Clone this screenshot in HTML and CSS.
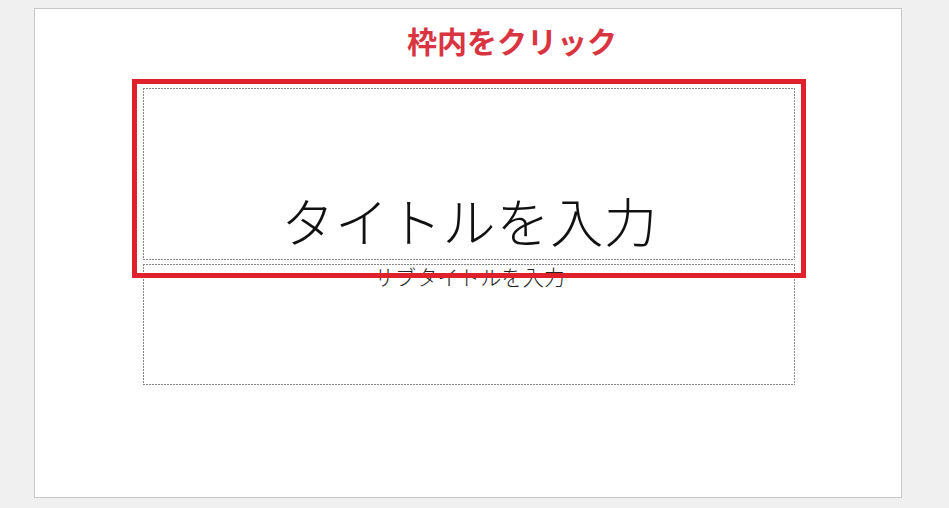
FILE: index.html
```html
<!DOCTYPE html>
<html lang="ja">
<head>
<meta charset="utf-8">
<title>タイトルスライド</title>
<link rel="stylesheet" href="styles.css">
</head>
<body>
<div class="slide">
  <div class="ph ph-title"><span class="title-text">タイトルを入力</span></div>
  <div class="ph ph-sub"><span class="sub-text">サブタイトルを入力</span></div>
  <div class="note-label">枠内をクリック</div>
  <div class="note-box"></div>
</div>
</body>
</html>
```
FILE: styles.css
```css
html, body {
  margin: 0;
  padding: 0;
}
body {
  background: #f0f0f0;
  width: 949px;
  height: 508px;
  overflow: hidden;
  font-family: "Noto Sans CJK JP", "Noto Sans", sans-serif;
}
.slide {
  position: relative;
  box-sizing: border-box;
  margin: 8px 0 0 34px;
  width: 868px;
  height: 490px;
  background: #ffffff;
  border: 1px solid #c6c6c6;
  padding: 79px 0 0 108px;
  display: flex;
  flex-direction: column;
  gap: 4px;
}
.ph {
  box-sizing: border-box;
  width: 652px;
  display: flex;
  justify-content: center;
  background-image:
    repeating-linear-gradient(90deg, #858585 0 2px, transparent 2px 3px),
    repeating-linear-gradient(90deg, #858585 0 2px, transparent 2px 3px),
    repeating-linear-gradient(180deg, #858585 0 2px, transparent 2px 3px),
    repeating-linear-gradient(180deg, #858585 0 2px, transparent 2px 3px);
  background-size: 100% 1px, 100% 1px, 1px 100%, 1px 100%;
  background-position: 0 0, 0 100%, 0 0, 100% 0;
  background-repeat: no-repeat;
}
.ph-title {
  height: 172px;
  align-items: flex-end;
  padding-bottom: 13px;
}
.ph-sub {
  height: 121px;
  align-items: flex-start;
}
.title-text {
  font-size: 53px;
  font-weight: 300;
  line-height: 1;
  color: #111111;
  letter-spacing: 0.8px;
  margin-left: 1px;
}
.sub-text {
  font-size: 21px;
  font-weight: 300;
  line-height: 1.2;
  color: #222222;
  letter-spacing: 0.3px;
  margin-left: 1px;
}
.note-label {
  position: absolute;
  left: 372px;
  top: 13px;
  font-size: 30px;
  font-weight: 700;
  line-height: 1.2;
  color: #d9343f;
  white-space: nowrap;
}
.note-box {
  position: absolute;
  box-sizing: border-box;
  left: 97px;
  top: 70px;
  width: 674px;
  height: 199px;
  border: 5px solid #e0202a;
}
```
